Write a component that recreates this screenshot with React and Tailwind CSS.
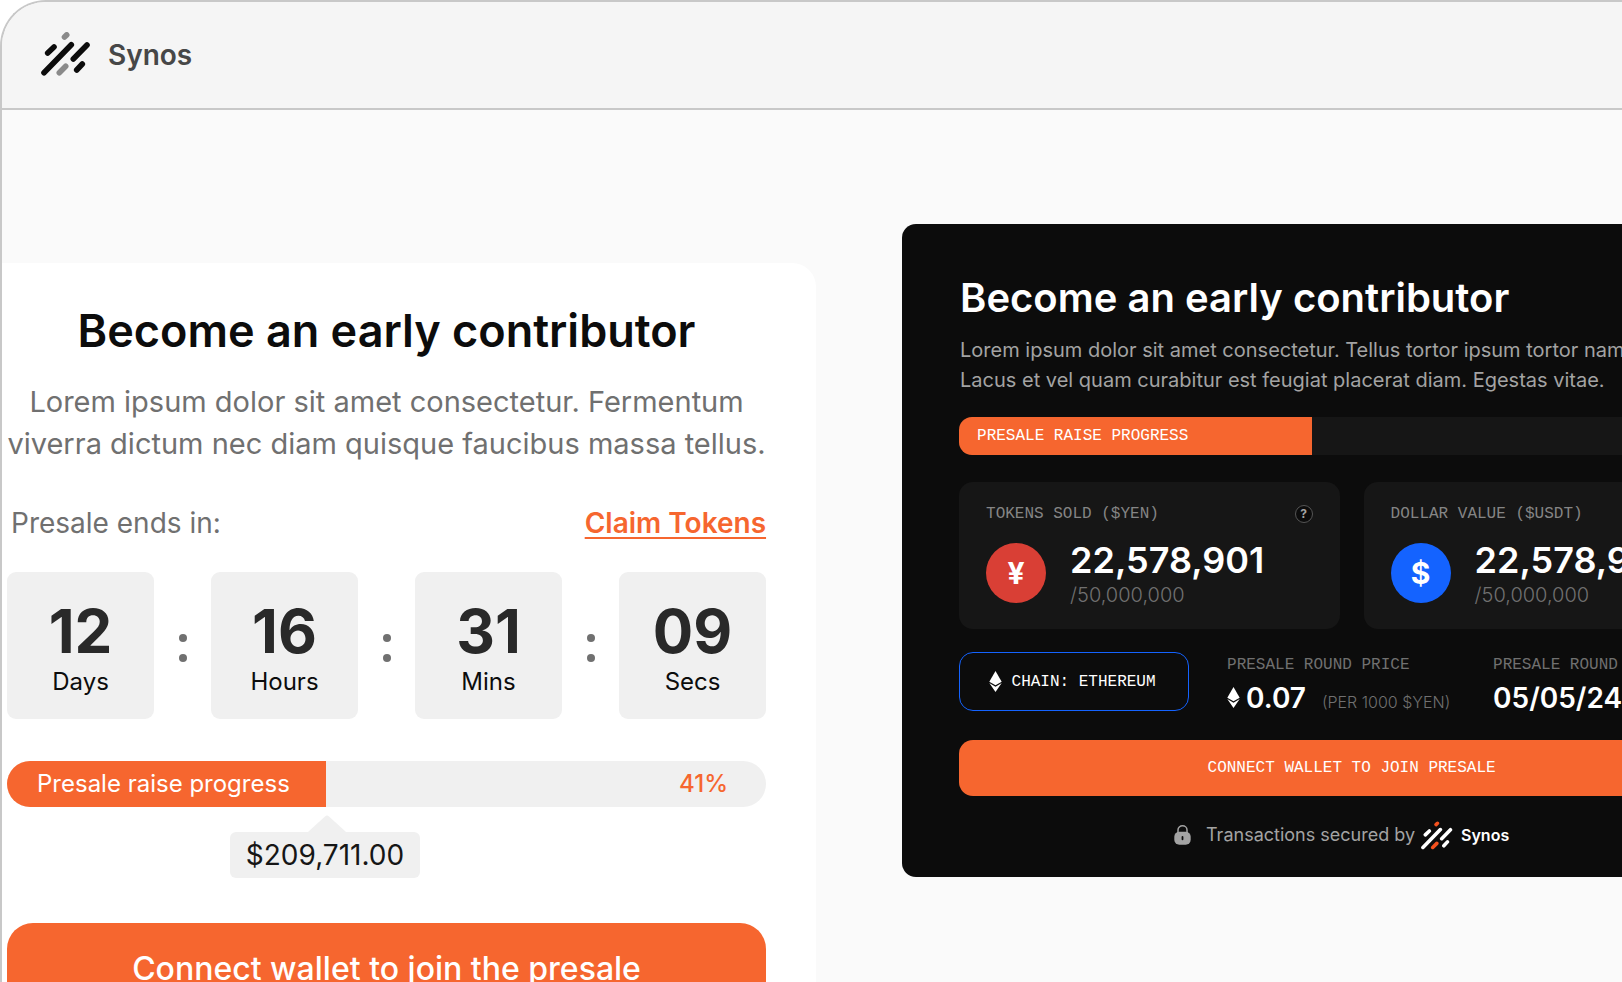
const mono = "font-['Liberation_Mono',monospace] text-base leading-5";
const display = "font-['Inter',sans-serif]";

function Logo({ className, main, accent }) {
  return (
    <svg viewBox="0 0 50 44" className={className} fill="none" strokeWidth="5.6" strokeLinecap="round" aria-hidden="true">
      <path d="M3 40.7 30.3 12.7M6.7 21 13 15M32.3 27 46 13M35.7 38l5.600-6" stroke={main} />
      <path d="M23.500 5l2.200-2.100M18.300 40.700l6.400-6.400" stroke={accent} />
    </svg>
  );
}

function Ethereum({ className }) {
  return (
    <svg viewBox="0 0 13 21" className={className} fill="white" aria-hidden="true">
      <path d="M6.500 0 12.700 10.700 6.500 14.300.3 10.700Z" />
      <path d="M.3 12.100 6.500 15.700l6.200-3.600L6.500 21Z" />
    </svg>
  );
}

function Lock() {
  return (
    <svg viewBox="0 0 17 20" className="h-5 w-[17px]" aria-hidden="true">
      <path d="M4 8V5a4.500 4.200 0 0 1 9 0v3" fill="none" stroke="#a3a3a3" strokeWidth="1.500" />
      <rect x="0.300" y="6.800" width="16.400" height="13" rx="5" fill="#a3a3a3" />
      <rect x="7.600" y="11" width="1.800" height="4.200" rx="0.900" fill="#0c0c0c" />
    </svg>
  );
}

function TimeBox({ value, unit }) {
  return (
    <div className="flex h-[147px] flex-1 flex-col items-center rounded-[9px] bg-[#f0f0f0] pt-[23px]">
      <span className={`${display} text-[60px] leading-[72px] font-bold text-[#292929]`}>{value}</span>
      <span className="text-2xl leading-[29px] text-[#0c0c0c]">{unit}</span>
    </div>
  );
}

function Colon() {
  return (
    <div className="flex w-[57px] flex-col items-center justify-center gap-3 pt-1" aria-hidden="true">
      <span className="size-2 rounded-full bg-[#707070]" />
      <span className="size-2 rounded-full bg-[#707070]" />
    </div>
  );
}

function StatCard({ label, symbol, tone, help }) {
  return (
    <div className="h-[147px] flex-1 rounded-[14px] bg-[#161616] px-[27px] pt-[22px]">
      <div className="flex h-5 items-center justify-between">
        <span className={`${mono} text-[#858585]`}>{label}</span>
        {help && (
          <button type="button" aria-label="About tokens sold" className="flex size-[18px] items-center justify-center rounded-full border border-[#555] bg-[#0c0c0c] text-xs leading-none font-bold text-[#a3a3a3]">
            ?
          </button>
        )}
      </div>
      <div className="mt-[14px] flex items-center gap-6">
        <div className={`flex size-15 shrink-0 items-center justify-center rounded-full text-[30px] leading-none font-bold text-white ${tone}`}>
          {symbol}
        </div>
        <div>
          <p className={`${display} text-[36px] leading-11 font-semibold text-white`}>22,578,901</p>
          <p className="text-xl leading-[26px] font-light text-[#707070]">/50,000,000</p>
        </div>
      </div>
    </div>
  );
}

const units = [
  ["12", "Days"],
  ["16", "Hours"],
  ["31", "Mins"],
  ["09", "Secs"],
];

function LightCard() {
  return (
    <section className="mt-[153px] w-[50.25%] shrink-0 rounded-tr-3xl bg-white pt-[38px] pr-[50px] pl-[5px]">
      <h1 className={`${display} text-center text-[45px] leading-[60px] font-semibold whitespace-nowrap text-[#0c0c0c]`}>Become an early contributor</h1>
      <p className="mt-5 text-center text-[29px] leading-[42px] whitespace-nowrap text-[#707070]">
        Lorem ipsum dolor sit amet consectetur. Fermentum
        <br />
        viverra dictum nec diam quisque faucibus massa tellus.
      </p>
      <div className="mt-[37px] flex items-center justify-between pl-1 text-[28px] leading-[42px] text-[#707070]">
        <span>Presale ends in:</span>
        <a href="#claim" className={`${display} font-semibold text-[#f6662f] underline decoration-2 underline-offset-4`}>Claim Tokens</a>
      </div>
      <div className="mt-7 flex">
        {units.flatMap(([value, unit], i) => [
          i > 0 && <Colon key={`colon-${unit}`} />,
          <TimeBox key={unit} value={value} unit={unit} />,
        ])}
      </div>
      <div className={`${display} mt-[42px] flex h-[46px] items-center overflow-hidden rounded-[23px] bg-[#f0f0f0] text-2xl`}>
        <div className="flex h-full w-[42%] items-center bg-[#f6662f] pl-[30px] whitespace-nowrap text-white">Presale raise progress</div>
        <span className="ml-auto pr-[38px] font-medium text-[#f6662f]">41%</span>
      </div>
      <div className="mt-2 ml-[223px] flex w-[190px] flex-col items-center">
        <svg viewBox="0 0 38 17" className="ml-1 h-[17px] w-[38px]" aria-hidden="true">
          <path d="M0 17 17 1.500Q19-.5 21 1.500L38 17Z" fill="#f0f0f0" />
        </svg>
        <div className={`${display} flex h-[46px] w-full items-center justify-center rounded-md bg-[#f0f0f0] text-[28px] text-[#161616]`}>$209,711.00</div>
      </div>
      <button type="button" className={`${display} mt-[45px] h-[92px] w-full rounded-[26px] bg-[#f6662f] text-[32px] font-medium text-white`}>
        Connect wallet to join the presale
      </button>
    </section>
  );
}

function DarkCard() {
  return (
    <section className="mt-[114px] ml-[86px] w-[55.5%] shrink-0 rounded-[14px] bg-[#0c0c0c] px-[57px] pt-12 pb-[27px]">
      <div className="pl-px">
        <h2 className={`${display} text-[40px] leading-[52px] font-semibold text-white`}>Become an early contributor</h2>
        <p className="mt-[11px] text-xl leading-[30px] whitespace-nowrap text-[#a3a3a3]">
          Lorem ipsum dolor sit amet consectetur. Tellus tortor ipsum tortor nam.
          <br />
          Lacus et vel quam curabitur est feugiat placerat diam. Egestas vitae.
        </p>
      </div>
      <div className="mt-[22px] h-[38px] overflow-hidden rounded-[13px] bg-[#161616]">
        <div className={`${mono} flex h-full w-[45%] items-center bg-[#f6662f] pl-[18px] text-white`}>PRESALE RAISE PROGRESS</div>
      </div>
      <div className="mt-[27px] flex gap-6">
        <StatCard label="TOKENS SOLD ($YEN)" symbol="¥" tone="bg-[#d93f35]" help />
        <StatCard label="DOLLAR VALUE ($USDT)" symbol="$" tone="bg-[#1463ff]" />
      </div>
      <div className="mt-[23px] flex items-start whitespace-nowrap">
        <button type="button" className={`${mono} flex h-[59px] w-[230px] items-center justify-center gap-2.5 rounded-[14px] border border-[#1463ff] pr-1 text-white`}>
          <Ethereum className="h-[21px] w-[13px]" />
          CHAIN: ETHEREUM
        </button>
        <div className="ml-[38px] w-[266px]">
          <p className={`${mono} mt-[3px] text-[#707070]`}>PRESALE ROUND PRICE</p>
          <p className="mt-[7px] flex items-baseline text-white">
            <Ethereum className="h-[21px] w-[13px]" />
            <span className={`${display} ml-1.5 text-[28px] leading-8 font-semibold`}>0.07</span>
            <span className="ml-4 text-base leading-8 font-light text-[#707070]">(PER 1000 $YEN)</span>
          </p>
        </div>
        <div>
          <p className={`${mono} mt-[3px] text-[#707070]`}>PRESALE ROUND</p>
          <p className={`${display} mt-[7px] text-[28px] leading-8 font-semibold text-white`}>05/05/24</p>
        </div>
      </div>
      <button type="button" className={`${mono} mt-[22px] h-14 w-full rounded-[14px] bg-[#f6662f] text-white`}>
        CONNECT WALLET TO JOIN PRESALE
      </button>
      <p className="mt-6 flex items-center justify-center pr-5 text-lg leading-[30px] text-[#a3a3a3]">
        <Lock />
        <span className="ml-[15px]">Transactions secured by</span>
        <Logo className="ml-1.5 h-[29px] w-8" main="#ffffff" accent="#f4511e" />
        <span className={`${display} ml-2 text-base font-semibold text-white`}>Synos</span>
      </p>
    </section>
  );
}

export default function App() {
  return (
    <div className="h-screen overflow-hidden bg-white font-['Inter',sans-serif]">
      <div className="flex h-full flex-col overflow-hidden rounded-tl-[46px] border-t-2 border-l-2 border-[#c8c8c8] bg-[#fafafa]">
        <header className="flex h-[108px] shrink-0 items-center gap-[17px] border-b-2 border-[#c8c8c8] bg-[#f5f5f5] pb-0.5 pl-[39px]">
          <Logo className="h-11 w-[50px]" main="#0c0c0c" accent="#8a8a8a" />
          <span className={`${display} pt-0.5 text-[28px] font-semibold text-[#474747]`}>Synos</span>
        </header>
        <main className="flex items-start">
          <LightCard />
          <DarkCard />
        </main>
      </div>
    </div>
  );
}
